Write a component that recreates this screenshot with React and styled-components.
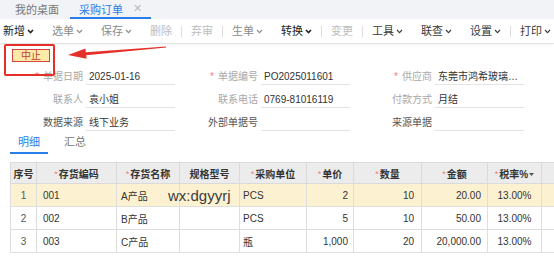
import { Fragment } from "react";
import styled, { createGlobalStyle } from "styled-components";

const GlobalStyle = createGlobalStyle`
  html, body {
    margin: 0;
    padding: 0;
    background: #fff;
  }
  body {
    font-family: "Liberation Sans", "Noto Sans CJK SC", sans-serif;
    font-size: 10px;
    color: #333;
    overflow: hidden;
  }
`;

const Page = styled.div`
  position: relative;
  width: 554px;
  height: 257px;
  overflow: hidden;
  background: #fff;
`;

const TabBar = styled.div`
  display: flex;
  height: 19px;
  background: #f1f3f7;
`;

const PageTab = styled.div`
  display: flex;
  align-items: center;
  gap: 10px;
  box-sizing: border-box;
  height: 19px;
  padding: ${(p) => p.$pad};
  font-size: 11px;
  white-space: nowrap;
  color: ${(p) => (p.$active ? "#2b7de9" : "#777")};
  border-bottom: 2px solid ${(p) => (p.$active ? "#2b7de9" : "transparent")};
`;

const Close = styled.span`
  color: #bbb;
  font-size: 11px;
`;

const Toolbar = styled.div`
  display: flex;
  align-items: center;
  height: 24px;
  padding-left: 3px;
  overflow: hidden;
  border-bottom: 1px solid #e4e4e4;
  box-shadow: 0 1px 2px rgba(0, 0, 0, 0.05);
`;

const TOOL_COLORS = { strong: "#222", dark: "#3a3a3a", normal: "#8a8a8a", off: "#bdbdbd" };

const ToolButton = styled.div`
  display: flex;
  flex-shrink: 0;
  align-items: center;
  gap: 2px;
  margin: 0 9px;
  font-size: 11px;
  line-height: 24px;
  white-space: nowrap;
  color: ${(p) => TOOL_COLORS[p.$tone]};
  &:first-child {
    margin-left: 0;
  }
`;

const Sep = styled.span`
  flex-shrink: 0;
  width: 1px;
  height: 11px;
  background: #ddd;
`;

const StatusRow = styled.div`
  height: 21px;
  padding: 5px 0 0 12px;
  box-sizing: border-box;
`;

const StopButton = styled.button`
  display: block;
  width: 38px;
  height: 13px;
  padding: 0;
  background: #fdeaa6;
  border: 1px solid #d8443a;
  color: #c53a2e;
  font-family: "Liberation Sans", "Noto Sans CJK SC", sans-serif;
  font-size: 10px;
  line-height: 11px;
`;

const Form = styled.div`
  display: grid;
  grid-template-columns: 84px 91px 84px 91px 83px 91px;
  row-gap: 3px;
`;

const Label = styled.div`
  height: 20px;
  line-height: 23px;
  text-align: right;
  padding-right: 1px;
  white-space: nowrap;
  color: ${(p) => (p.$strong ? "#555" : "#a8a8a8")};
`;

const Star = styled.span`
  color: #f07c7c;
  margin-right: 4px;
`;

const Field = styled.div`
  margin-left: 2px;
  height: 20px;
  line-height: 23px;
  box-sizing: border-box;
  padding-left: 3px;
  border-bottom: 1px solid #e3e3e3;
  white-space: nowrap;
  overflow: hidden;
  text-overflow: ellipsis;
  color: #333;
`;

const DetailTabs = styled.div`
  display: flex;
  padding-left: 10px;
  margin-top: 1px;
`;

const DetailTab = styled.div`
  height: 22px;
  line-height: 21px;
  box-sizing: border-box;
  padding: 0 8px;
  margin-right: 8px;
  font-size: 11px;
  color: ${(p) => (p.$active ? "#2b7de9" : "#777")};
  border-bottom: 2px solid ${(p) => (p.$active ? "#2b7de9" : "transparent")};
`;

const TableWrap = styled.div`
  margin: 8px 0 0 10px;
`;

const Table = styled.table`
  border-collapse: collapse;
  table-layout: fixed;
  width: 601px;
`;

const Th = styled.th`
  height: 20px;
  padding: 0;
  background: #ececec;
  border: 1px solid #dadada;
  font-weight: bold;
  color: #333;
  text-align: center;
  white-space: nowrap;
  overflow: hidden;
`;

const HeadStar = styled.span`
  color: #f07c7c;
  font-weight: normal;
  font-size: 9px;
  margin-right: 1px;
  vertical-align: 1px;
`;

const Row = styled.tr`
  background: ${(p) => (p.$hot ? "#fcf2d2" : "#fff")};
`;

const Td = styled.td`
  height: 22px;
  padding: 0 ${(p) => p.$pad ?? 5}px;
  border: 1px solid #dedede;
  text-align: ${(p) => p.$align || "left"};
  color: ${(p) => (p.$muted ? "#555" : "#333")};
  white-space: nowrap;
  overflow: hidden;
`;

const Watermark = styled.div`
  position: absolute;
  left: 168px;
  top: 187px;
  font-family: "Liberation Sans", sans-serif;
  font-size: 15px;
  color: #3c3c3c;
  pointer-events: none;
`;

const Highlight = styled.div`
  position: absolute;
  left: 4px;
  top: 44px;
  width: 51px;
  height: 32px;
  box-sizing: border-box;
  border: 2px solid #e5302a;
  border-radius: 2px;
  pointer-events: none;
`;

const ArrowLayer = styled.svg`
  position: absolute;
  left: 0;
  top: 0;
  pointer-events: none;
`;

const Chevron = ({ bold }) => (
  <svg width="7" height="5" viewBox="0 0 7 5">
    <path
      d="M1 1 L3.5 3.6 L6 1"
      fill="none"
      stroke="currentColor"
      strokeWidth={bold ? 1.6 : 1.1}
    />
  </svg>
);

const Caret = () => (
  <svg width="5" height="4" viewBox="0 0 5 4" style={{ marginLeft: 1, verticalAlign: 1 }}>
    <path d="M0 0 H5 L2.5 3 Z" fill="#555" />
  </svg>
);

const tools = [
  { label: "新增", tone: "strong", menu: true },
  { label: "选单", tone: "normal", menu: true },
  { label: "保存", tone: "normal", menu: true },
  { label: "删除", tone: "off" },
  "sep",
  { label: "弃审", tone: "off" },
  "sep",
  { label: "生单", tone: "normal", menu: true },
  { label: "转换", tone: "strong", menu: true },
  "sep",
  { label: "变更", tone: "off" },
  "sep",
  { label: "工具", tone: "dark", menu: true },
  { label: "联查", tone: "dark", menu: true },
  { label: "设置", tone: "dark", menu: true },
  "sep",
  { label: "打印", tone: "dark", menu: true },
];

const fields = [
  { label: "单据日期", value: "2025-01-16", req: true },
  { label: "单据编号", value: "PO2025011601", req: true },
  { label: "供应商", value: "东莞市鸿希玻璃制品有限公司", req: true },
  { label: "联系人", value: "袁小姐" },
  { label: "联系电话", value: "0769-81016119" },
  { label: "付款方式", value: "月结" },
  { label: "数据来源", value: "线下业务", strong: true },
  { label: "外部单据号", value: "", strong: true },
  { label: "来源单据", value: "", strong: true },
];

const columns = [
  { title: "序号", width: 26 },
  { title: "存货编码", width: 80, req: true },
  { title: "存货名称", width: 63, req: true },
  { title: "规格型号", width: 60 },
  { title: "采购单位", width: 67, req: true },
  { title: "单价", width: 47, req: true },
  { title: "数量", width: 68, req: true },
  { title: "金额", width: 66, req: true },
  { title: "税率%", width: 54, req: true, caret: true },
  { title: "含税合计", width: 70, req: true },
];

const rows = [
  { no: 1, code: "001", name: "A产品", unit: "PCS", price: "2", qty: "10", amount: "20.00", tax: "13.00%" },
  { no: 2, code: "002", name: "B产品", unit: "PCS", price: "5", qty: "10", amount: "50.00", tax: "13.00%" },
  { no: 3, code: "003", name: "C产品", unit: "瓶", price: "1,000", qty: "20", amount: "20,000.00", tax: "13.00%" },
];

export default function App() {
  return (
    <Page>
      <GlobalStyle />
      <TabBar>
        <PageTab $pad="0 11px 0 15px">我的桌面</PageTab>
        <PageTab $active $pad="0 9px">
          采购订单
          <Close>✕</Close>
        </PageTab>
      </TabBar>

      <Toolbar>
        {tools.map((t, i) =>
          t === "sep" ? (
            <Sep key={i} />
          ) : (
            <ToolButton key={i} $tone={t.tone}>
              {t.label}
              {t.menu && <Chevron bold={t.tone === "strong"} />}
            </ToolButton>
          )
        )}
      </Toolbar>

      <StatusRow>
        <StopButton>中止</StopButton>
      </StatusRow>

      <Form>
        {fields.map((f) => (
          <Fragment key={f.label}>
            <Label $strong={f.strong}>
              {f.req && <Star>*</Star>}
              {f.label}
            </Label>
            <Field>{f.value}</Field>
          </Fragment>
        ))}
      </Form>

      <DetailTabs>
        <DetailTab $active>明细</DetailTab>
        <DetailTab>汇总</DetailTab>
      </DetailTabs>

      <TableWrap>
        <Table>
          <colgroup>
            {columns.map((c) => (
              <col key={c.title} style={{ width: c.width }} />
            ))}
          </colgroup>
          <thead>
            <tr>
              {columns.map((c) => (
                <Th key={c.title}>
                  {c.req && <HeadStar>*</HeadStar>}
                  {c.title}
                  {c.caret && <Caret />}
                </Th>
              ))}
            </tr>
          </thead>
          <tbody>
            {rows.map((r) => (
              <Row key={r.no} $hot={r.no === 1}>
                <Td $align="center" $muted>{r.no}</Td>
                <Td $pad={6}>{r.code}</Td>
                <Td $pad={4}>{r.name}</Td>
                <Td />
                <Td $pad={3}>{r.unit}</Td>
                <Td $align="right">{r.price}</Td>
                <Td $align="right" $pad={7}>{r.qty}</Td>
                <Td $align="right" $pad={6}>{r.amount}</Td>
                <Td $align="center" $pad={0}>{r.tax}</Td>
                <Td />
              </Row>
            ))}
          </tbody>
        </Table>
      </TableWrap>

      <Watermark>wx:dgyyrj</Watermark>
      <Highlight />
      <ArrowLayer width="554" height="80" viewBox="0 0 554 80">
        <polygon points="68,55 85.4,48.6 85.8,52.2 166,46.6 166.2,47.6 86.2,55.2 86.6,58.8" fill="#e5302a" />
      </ArrowLayer>
    </Page>
  );
}
